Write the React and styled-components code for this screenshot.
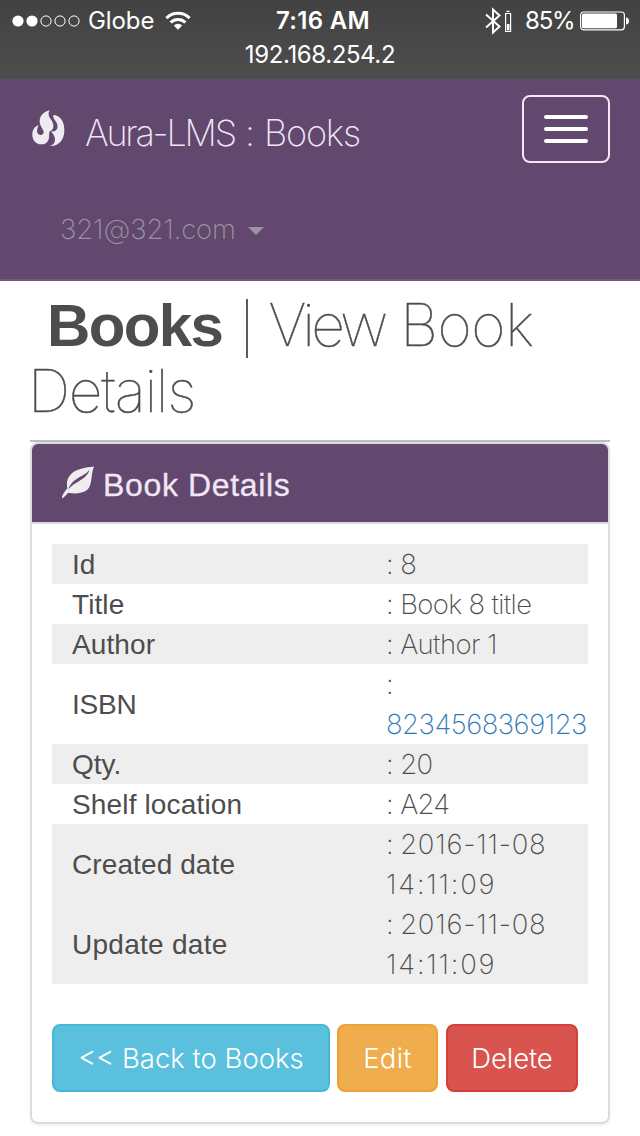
import React from "react";
import styled, { createGlobalStyle } from "styled-components";

const Global = createGlobalStyle`
  * { box-sizing: border-box; }
  html, body { margin: 0; padding: 0; background: #fff; }
  body { width: 640px; height: 1136px; overflow: hidden; color: #4d4d4d; font-family: "Inter", "Liberation Sans", sans-serif; }
`;

const Screen = styled.div`
  width: 640px;
  height: 1136px;
  display: flex;
  flex-direction: column;
  overflow: hidden;
`;

const StatusBar = styled.div`
  height: 79px;
  flex: none;
  background: linear-gradient(#424242, #4d4d4d);
  color: #fff;
  display: flex;
  flex-direction: column;
  padding-top: 5px;
`;
const StatusRow = styled.div`
  display: grid;
  grid-template-columns: 273px 100px 267px;
  height: 32px;
  align-items: center;
`;
const StatusSide = styled.div`
  display: flex;
  align-items: center;
  padding-left: ${(p) => p.$left || 0}px;
`;
const StatusText = styled.span`
  font-size: 24px;
  line-height: 32px;
  font-weight: ${(p) => p.$weight || 400};
  letter-spacing: ${(p) => p.$spacing || 0}px;
  white-space: nowrap;
  text-align: ${(p) => (p.$center ? "center" : "left")};
  margin: ${(p) => p.$margin || 0};
`;

const Navbar = styled.nav`
  height: 202px;
  flex: none;
  background: #62476f;
  border-bottom: 2px solid #715780;
  display: flex;
  flex-direction: column;
`;
const NavHeader = styled.div`
  height: 100px;
  display: flex;
  align-items: flex-start;
  justify-content: space-between;
  padding: 16px 30px 0 32px;
`;
const Brand = styled.a`
  display: flex;
  align-items: flex-start;
  color: #eee6f3;
  padding-top: 15px;
`;
const BrandText = styled.span`
  font-size: 36px;
  font-weight: 200;
  line-height: 44px;
  letter-spacing: -1.2px;
  word-spacing: 1.3px;
  margin: 1px 0 0 20px;
  white-space: nowrap;
`;
const Tracked = styled.span`
  letter-spacing: ${(p) => p.$spacing}px;
`;
const Toggle = styled.button`
  width: 88px;
  height: 68px;
  border: 2px solid #f2e8f7;
  border-radius: 8px;
  background: transparent;
  padding: 0;
  display: flex;
  flex-direction: column;
  align-items: center;
  justify-content: center;
  gap: 8px;
`;
const ToggleBar = styled.span`
  width: 44px;
  height: 4px;
  border-radius: 2px;
  background: #fff;
`;
const UserMenu = styled.div`
  display: flex;
  align-items: center;
  padding: 30px 0 0 60px;
  color: #9a949c;
  font-size: 27.5px;
  font-weight: 200;
  line-height: 40px;
  letter-spacing: -0.1px;
`;
const Caret = styled.span`
  border: 8px solid transparent;
  border-top-color: #9b979b;
  border-bottom: 0;
  margin: 3px 0 0 12px;
`;

const Content = styled.main`
  display: flex;
  flex-direction: column;
  padding: 11px 30px 0;
`;
const Title = styled.h1`
  margin: 0;
  height: 148px;
  font-size: 59px;
  line-height: 66px;
  font-weight: 100;
  -webkit-text-stroke: 0.5px #4d4d4d;
`;
const TitleLine = styled.span`
  display: block;
  height: 66px;
  white-space: pre;
  margin-left: ${(p) => p.$indent || 0}px;
  letter-spacing: ${(p) => p.$spacing}px;
`;
const Strong = styled.b`
  font-family: "Liberation Sans", sans-serif;
  font-size: 60px;
  font-weight: 700;
  letter-spacing: -1.6px;
  -webkit-text-stroke: 0;
`;
const Divider = styled.span`
  display: inline-block;
  width: 2px;
  height: 59px;
  margin: 0 20px 0 24px;
  vertical-align: -12px;
  background: #5c5c5c;
`;
const Rule = styled.hr`
  width: 580px;
  margin: 0;
  border: 0;
  height: 2px;
  background: #bdbdbd;
`;
const Panel = styled.section`
  height: 682px;
  border: 2px solid #dcdcdc;
  border-radius: 8px;
  box-shadow: 0 2px 2px rgba(0, 0, 0, 0.05);
  display: flex;
  flex-direction: column;
  background: #fff;
`;
const PanelHeading = styled.header`
  height: 80px;
  flex: none;
  background: #62476f;
  border-bottom: 2px solid #dcdcdc;
  border-radius: 6px 6px 0 0;
  display: flex;
  align-items: flex-start;
  padding: 22px 30px 0;
`;
const PanelTitle = styled.h2`
  margin: 1px 0 0 9px;
  font: 400 32px/36px "Liberation Sans", sans-serif;
  color: #f0e6f4;
  letter-spacing: 0.65px;
  -webkit-text-stroke: 0.3px #f0e6f4;
`;
const Details = styled.dl`
  margin: 20px 20px 0;
`;
const Row = styled.div`
  display: grid;
  grid-template-columns: 314px 1fr;
  align-items: center;
  padding-left: 20px;
  line-height: 40px;
  background: ${(p) => (p.$shaded ? "#eeeeee" : "transparent")};
`;
const Label = styled.dt`
  padding-top: 2px;
  line-height: 38px;
  font-family: "Liberation Sans", sans-serif;
  font-size: 28px;
  letter-spacing: ${(p) => p.$spacing}px;
`;
const Value = styled.dd`
  margin: 0;
  font-size: 27.5px;
  font-weight: 200;
`;
const ValueLine = styled.span`
  display: block;
  white-space: pre;
  letter-spacing: -0.6px;
  color: ${(p) => (p.$link ? "#337ab7" : "inherit")};
`;
const Actions = styled.div`
  display: flex;
  padding: 40px 20px 0;
`;
const tones = {
  info: ["#5bc0de", "#46b8da"],
  warning: ["#f0ad4e", "#eea236"],
  danger: ["#d9534f", "#d43f3a"],
};
const Button = styled.button`
  width: ${(p) => p.$width}px;
  height: 68px;
  margin-right: ${(p) => p.$gap || 0}px;
  padding: 0;
  border: 2px solid ${(p) => tones[p.$tone][1]};
  border-radius: 8px;
  background: ${(p) => tones[p.$tone][0]};
  color: #fff;
  font: 300 27.5px/40px "Inter", sans-serif;
  letter-spacing: ${(p) => p.$spacing}px;
  white-space: nowrap;
`;

const Signal = () => (
  <svg width="68" height="14" viewBox="0 0 68 14">
    {[6, 20, 34, 48, 62].map((x, i) => (
      <circle key={x} cx={x} cy="7" r={i < 2 ? 5.6 : 5.1} fill={i < 2 ? "#fff" : "none"} stroke="#fff" strokeWidth={i < 2 ? 0 : 1} />
    ))}
  </svg>
);
const Wifi = () => (
  <svg width="26" height="20" viewBox="0 0 26 20" fill="none" stroke="#fff" strokeWidth="3">
    <path d="M1.4 7.1a16.4 16.4 0 0 1 23.2 0" />
    <path d="M5.6 11.5a10.5 10.5 0 0 1 14.8 0" />
    <path d="M13 18.8 8.8 14.4a6.2 6.2 0 0 1 8.4 0z" fill="#fff" stroke="none" />
  </svg>
);
const Bluetooth = () => (
  <svg width="28" height="28" viewBox="0 0 28 28" fill="none" stroke="#fff" strokeWidth="2">
    <path d="M1 7.5 14.5 19.5 8 25.5V2.5l6.5 6L1 20.5" />
    <path d="M20.6 6.5h5v18h-5zM21.5 4.3h3" strokeWidth="1.2" />
    <path d="M21.8 17h2.7v6.3h-2.7z" fill="#fff" stroke="none" />
  </svg>
);
const Battery = () => (
  <svg width="50" height="20" viewBox="0 0 50 20">
    <rect x=".6" y="1" width="43.8" height="17.8" rx="3" fill="none" stroke="#fff" strokeWidth="1.2" />
    <rect x="2" y="2.5" width="35" height="14.8" rx="1.5" fill="#fff" />
    <path d="M46 6.5c4 0 4 7 0 7z" fill="#fff" />
  </svg>
);
const Fire = () => (
  <svg width="33" height="37" viewBox="96 89 99 111" fill="#eeecf0">
    <path d="M149 90C128 96 119 108 119 123C119 137 130 146 131 155C131 163 121 167 115 161C109 155 111 145 116 134C103 139 97 149 97 163C97 180 108 191 123 192C138 193 146 184 147 171C148 160 147 152 151 152C159 149 161 141 160 133C158 120 147 113 146 104C145 98 147 94 149 90Z" />
    <path d="M160 104C179 104 194 123 193 151C193 178 175 199 149 197C160 194 165 187 165 178C165 166 157 158 152 152C161 156 169 152 172 144C175 132 167 124 163 117C160 112 159 108 160 104Z" />
  </svg>
);
const Leaf = () => (
  <svg width="32" height="33" viewBox="126 107 96 98">
    <path d="M222 108C195 111 169 115 153 131C141 143 139 157 142 173C136 181 129 189 126 199L127 204L133 199L145 187C164 191 187 190 202 178C218 162 211 137 222 108Z" fill="#efedf1" />
    <path d="M145 176C150 160 163 148 182 138C195 131 205 124 209 118C203 136 192 142 180 150C167 158 156 164 145 176Z" fill="#62476f" />
  </svg>
);

const rows = [
  { label: "Id", ls: 0, lines: [{ lead: ": ", text: "8", ls: 0 }], shaded: true },
  { label: "Title", ls: 0.1, lines: [{ lead: ": ", text: "Book 8 title", ls: -0.65 }] },
  { label: "Author", ls: 0.1, lines: [{ lead: ": ", text: "Author 1", ls: -0.6 }], shaded: true },
  { label: "ISBN", ls: -0.2, lines: [{ lead: ":" }, { text: "8234568369123", ls: -0.5, link: true }] },
  { label: "Qty.", ls: 0, lines: [{ lead: ": ", text: "20", ls: -0.6 }], shaded: true },
  { label: "Shelf location", ls: 0.15, lines: [{ lead: ": ", text: "A24", ls: -0.8 }] },
  { label: "Created date", ls: 0.1, lines: [{ lead: ": ", text: "2016-11-08", ls: 0.75 }, { text: "14:11:09", ls: 1.8 }], shaded: true },
  { label: "Update date", ls: 0.27, lines: [{ lead: ": ", text: "2016-11-08", ls: 0.75 }, { text: "14:11:09", ls: 1.8 }], shaded: true },
];

export default function App() {
  return (
    <Screen>
      <Global />
      <StatusBar>
        <StatusRow>
          <StatusSide $left={12}>
            <Signal />
            <StatusText $margin="0 11px 0 8px" $spacing={-0.1}>Globe</StatusText>
            <Wifi />
          </StatusSide>
          <StatusText $center $weight={600} $spacing={0.3}>7:16 AM</StatusText>
          <StatusSide $left={112}>
            <Bluetooth />
            <StatusText $margin="0 6px 0 12px" $spacing={-1.2}>85%</StatusText>
            <Battery />
          </StatusSide>
        </StatusRow>
        <StatusText $center $spacing={-0.4} $margin="2px 0 0">192.168.254.2</StatusText>
      </StatusBar>
      <Navbar>
        <NavHeader>
          <Brand>
            <Fire />
            <BrandText>
              <Tracked $spacing={-2.2}>Aura-LMS</Tracked> : Books
            </BrandText>
          </Brand>
          <Toggle aria-label="Toggle navigation">
            <ToggleBar />
            <ToggleBar />
            <ToggleBar />
          </Toggle>
        </NavHeader>
        <UserMenu>
          321@321.com
          <Caret />
        </UserMenu>
      </Navbar>
      <Content>
        <Title>
          <TitleLine $indent={17} $spacing={-0.4}>
            <Strong>Books</Strong>
            <Divider />
            <Tracked $spacing={-3.8}>View</Tracked> Book
          </TitleLine>
          <TitleLine $indent={-2} $spacing={-1.3}>Details</TitleLine>
        </Title>
        <Rule />
        <Panel>
          <PanelHeading>
            <Leaf />
            <PanelTitle>Book Details</PanelTitle>
          </PanelHeading>
          <Details>
            {rows.map((r) => (
              <Row key={r.label} $shaded={r.shaded}>
                <Label $spacing={r.ls}>{r.label}</Label>
                <Value>
                  {r.lines.map((line, i) => (
                    <ValueLine key={i} $link={line.link}>
                      {line.lead}
                      {line.text && <Tracked $spacing={line.ls}>{line.text}</Tracked>}
                    </ValueLine>
                  ))}
                </Value>
              </Row>
            ))}
          </Details>
          <Actions>
            <Button $tone="info" $width={278} $gap={7} $spacing={0}>&lt;&lt; Back to Books</Button>
            <Button $tone="warning" $width={101} $gap={8} $spacing={0.3}>Edit</Button>
            <Button $tone="danger" $width={132} $spacing={-0.1}>Delete</Button>
          </Actions>
        </Panel>
      </Content>
    </Screen>
  );
}
